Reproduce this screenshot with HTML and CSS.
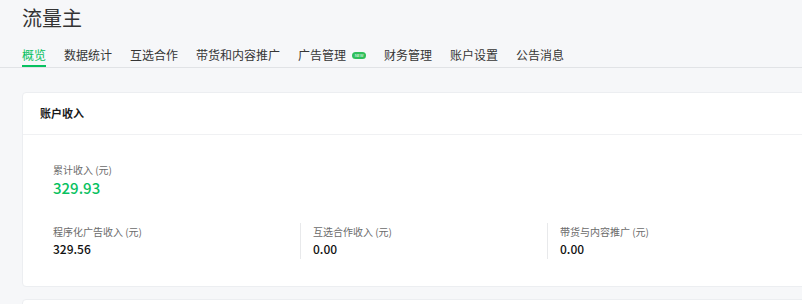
FILE: index.html
```html
<!DOCTYPE html>
<html lang="zh-CN">
  <head>
    <meta charset="UTF-8" />
    <meta name="viewport" content="width=device-width, initial-scale=1.0" />
    <title>流量主</title>
    <link rel="stylesheet" href="styles.css">
  </head>
  <body>
    <div class="page">
      <h1 class="title">流量主</h1>
      <ul class="tabs">
        <li class="active">概览</li>
        <li>数据统计</li>
        <li>互选合作</li>
        <li>带货和内容推广</li>
        <li>广告管理<span class="badge">NEW</span></li>
        <li>财务管理</li>
        <li>账户设置</li>
        <li>公告消息</li>
      </ul>

      <div class="card">
        <div class="card-hd">账户收入</div>
        <div class="card-bd">
          <div class="total">
            <p class="label">累计收入 (元)</p>
            <p class="total-num">329.93</p>
          </div>
          <div class="cols">
            <div class="col">
              <p class="label">程序化广告收入 (元)</p>
              <p class="num">329.56</p>
            </div>
            <div class="col">
              <p class="label">互选合作收入 (元)</p>
              <p class="num">0.00</p>
            </div>
            <div class="col">
              <p class="label">带货与内容推广 (元)</p>
              <p class="num">0.00</p>
            </div>
          </div>
        </div>
      </div>

      <div class="card next"></div>
    </div>
  </body>
</html>
```

FILE: styles.css
```css
* {
  margin: 0;
  padding: 0;
  list-style-type: none;
  box-sizing: border-box;
}
html,
body {
  background: #f6f7f9;
  overflow: hidden;
}
body {
  font-family: "Noto Sans CJK SC", "Noto Sans", sans-serif;
  color: #333;
}
.page {
  width: 1000px;
}
.title {
  padding: 4px 0 0 22px;
  font-size: 20px;
  line-height: 28px;
  font-weight: normal;
  color: #333;
}
.tabs {
  display: flex;
  gap: 18px;
  margin-top: 13px;
  padding-left: 22px;
  border-bottom: 1px solid #e1e3e6;
}
.tabs li {
  font-size: 12px;
  line-height: 20px;
  color: #353535;
  border-bottom: 2px solid transparent;
}
.tabs li.active {
  color: #07c160;
  border-bottom-color: #07c160;
}
.badge {
  display: inline-block;
  width: 14px;
  height: 7px;
  margin-left: 6px;
  border-radius: 4px;
  background: #2fbf5b;
  color: #fff;
  font-size: 4px;
  line-height: 7px;
  text-align: center;
  vertical-align: 3px;
}
.card {
  width: 820px;
  margin: 24px 0 0 22px;
  background: #fff;
  border: 1px solid #eceef1;
  border-radius: 4px;
}
.card-hd {
  height: 42px;
  padding-left: 17px;
  font-size: 11px;
  line-height: 41px;
  font-weight: bold;
  color: #1a1a1a;
  border-bottom: 1px solid #f0f1f3;
}
.card-bd {
  padding: 27px 0 27px 30px;
}
.label {
  font-size: 10px;
  line-height: 16px;
  color: #6b6b6b;
}
.total-num {
  font-size: 15px;
  line-height: 20px;
  font-weight: 500;
  color: #07c160;
}
.cols {
  display: grid;
  grid-template-columns: 247px 247px 247px;
  margin-top: 25px;
}
.col {
  padding: 1px 0 1px 12px;
  border-left: 1px solid #e8e9eb;
}
.col:first-child {
  padding-left: 0;
  border-left: none;
}
.num {
  font-size: 12px;
  line-height: 18px;
  font-weight: 500;
  color: #111;
}
.card.next {
  height: 40px;
  margin-top: 12px;
}
```
